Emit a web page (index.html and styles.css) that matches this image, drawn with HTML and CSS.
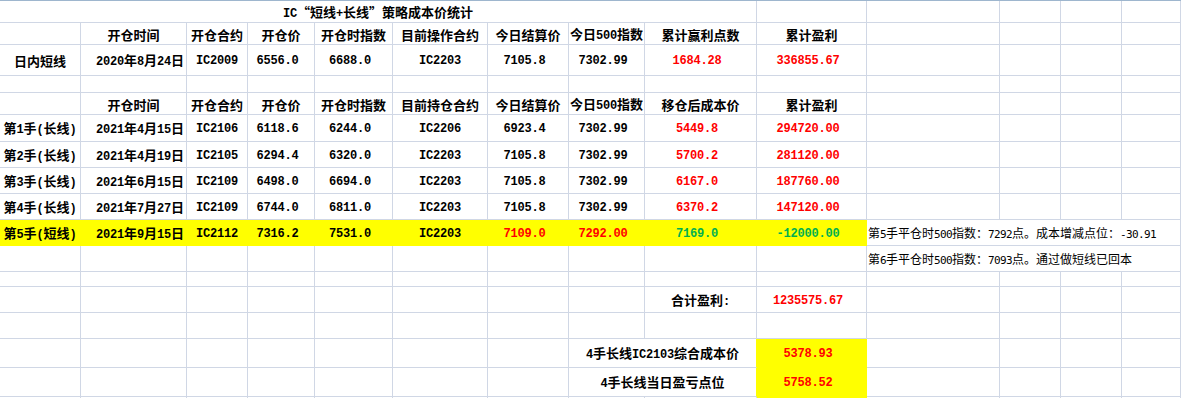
FILE: index.html
```html
<!DOCTYPE html>
<html lang="zh-CN">
<head>
<meta charset="utf-8">
<title>IC策略成本价统计</title>
<link rel="stylesheet" href="styles.css">
</head>
<body>
<div class="sheet">
  <!-- row 0 -->
  <div class="c s9 title"><span><span class="m">IC</span><span class="q">“</span>短线<span class="m">+</span>长线<span class="q">”</span>策略成本价统计</span></div>
  <div class="c"></div><div class="c"></div><div class="c"></div><div class="c"></div><div class="c"></div>
  <!-- row 1 -->
  <div class="c"></div>
  <div class="c">开仓时间</div>
  <div class="c">开仓合约</div>
  <div class="c">开仓价</div>
  <div class="c">开仓时指数</div>
  <div class="c">目前操作合约</div>
  <div class="c">今日结算价</div>
  <div class="c"><span>今日<span class="m">500</span>指数</span></div>
  <div class="c">累计赢利点数</div>
  <div class="c">累计盈利</div>
  <div class="c"></div><div class="c"></div><div class="c"></div><div class="c"></div>
  <!-- row 2 -->
  <div class="c">日内短线</div>
  <div class="c date"><span><span class="m">2020</span>年<span class="m">8</span>月<span class="m">24</span>日</span></div>
  <div class="c m">IC2009</div>
  <div class="c m num">6556.0</div>
  <div class="c m num">6688.0</div>
  <div class="c m">IC2203</div>
  <div class="c m num">7105.8</div>
  <div class="c m num">7302.99</div>
  <div class="c m num red">1684.28</div>
  <div class="c m num red">336855.67</div>
  <div class="c"></div><div class="c"></div><div class="c"></div><div class="c"></div>
  <!-- row 3 -->
  <div class="c"></div><div class="c"></div><div class="c"></div><div class="c"></div><div class="c"></div><div class="c"></div><div class="c"></div>
  <div class="c"></div><div class="c"></div><div class="c"></div><div class="c"></div><div class="c"></div><div class="c"></div><div class="c"></div>
  <!-- row 4 -->
  <div class="c"></div>
  <div class="c">开仓时间</div>
  <div class="c">开仓合约</div>
  <div class="c">开仓价</div>
  <div class="c">开仓时指数</div>
  <div class="c">目前持仓合约</div>
  <div class="c">今日结算价</div>
  <div class="c"><span>今日<span class="m">500</span>指数</span></div>
  <div class="c">移仓后成本价</div>
  <div class="c">累计盈利</div>
  <div class="c"></div><div class="c"></div><div class="c"></div><div class="c"></div>
  <!-- row 5 -->
  <div class="c"><span>第<span class="m">1</span>手<span class="m">(</span>长线<span class="m">)</span></span></div>
  <div class="c date"><span><span class="m">2021</span>年<span class="m">4</span>月<span class="m">15</span>日</span></div>
  <div class="c m">IC2106</div>
  <div class="c m num">6118.6</div>
  <div class="c m num">6244.0</div>
  <div class="c m">IC2206</div>
  <div class="c m num">6923.4</div>
  <div class="c m num">7302.99</div>
  <div class="c m num red">5449.8</div>
  <div class="c m num red">294720.00</div>
  <div class="c"></div><div class="c"></div><div class="c"></div><div class="c"></div>
  <!-- row 6 -->
  <div class="c"><span>第<span class="m">2</span>手<span class="m">(</span>长线<span class="m">)</span></span></div>
  <div class="c date"><span><span class="m">2021</span>年<span class="m">4</span>月<span class="m">19</span>日</span></div>
  <div class="c m">IC2105</div>
  <div class="c m num">6294.4</div>
  <div class="c m num">6320.0</div>
  <div class="c m">IC2203</div>
  <div class="c m num">7105.8</div>
  <div class="c m num">7302.99</div>
  <div class="c m num red">5700.2</div>
  <div class="c m num red">281120.00</div>
  <div class="c"></div><div class="c"></div><div class="c"></div><div class="c"></div>
  <!-- row 7 -->
  <div class="c"><span>第<span class="m">3</span>手<span class="m">(</span>长线<span class="m">)</span></span></div>
  <div class="c date"><span><span class="m">2021</span>年<span class="m">6</span>月<span class="m">15</span>日</span></div>
  <div class="c m">IC2109</div>
  <div class="c m num">6498.0</div>
  <div class="c m num">6694.0</div>
  <div class="c m">IC2203</div>
  <div class="c m num">7105.8</div>
  <div class="c m num">7302.99</div>
  <div class="c m num red">6167.0</div>
  <div class="c m num red">187760.00</div>
  <div class="c"></div><div class="c"></div><div class="c"></div><div class="c"></div>
  <!-- row 8 -->
  <div class="c"><span>第<span class="m">4</span>手<span class="m">(</span>长线<span class="m">)</span></span></div>
  <div class="c date"><span><span class="m">2021</span>年<span class="m">7</span>月<span class="m">27</span>日</span></div>
  <div class="c m">IC2109</div>
  <div class="c m num">6744.0</div>
  <div class="c m num">6811.0</div>
  <div class="c m">IC2203</div>
  <div class="c m num">7105.8</div>
  <div class="c m num">7302.99</div>
  <div class="c m num red">6370.2</div>
  <div class="c m num red">147120.00</div>
  <div class="c"></div><div class="c"></div><div class="c"></div><div class="c"></div>
  <!-- row 9 -->
  <div class="c yel"><span>第<span class="m">5</span>手<span class="m">(</span>短线<span class="m">)</span></span></div>
  <div class="c yel date"><span><span class="m">2021</span>年<span class="m">9</span>月<span class="m">15</span>日</span></div>
  <div class="c yel m">IC2112</div>
  <div class="c yel m num">7316.2</div>
  <div class="c yel m num">7531.0</div>
  <div class="c yel m">IC2203</div>
  <div class="c yel m num red">7109.0</div>
  <div class="c yel m num red">7292.00</div>
  <div class="c yel m num green">7169.0</div>
  <div class="c yel m num green">-12000.00</div>
  <div class="c s4 note"><span>第<span class="d">5</span>手平仓时<span class="d">500</span>指数：<span class="d">7292</span>点。成本增减点位：<span class="d">-30.91</span></span></div>
  <!-- row 10 -->
  <div class="c"></div><div class="c"></div><div class="c"></div><div class="c"></div><div class="c"></div>
  <div class="c"></div><div class="c"></div><div class="c"></div><div class="c"></div><div class="c"></div>
  <div class="c s4 note"><span>第<span class="d">6</span>手平仓时<span class="d">500</span>指数：<span class="d">7093</span>点。通过做短线已回本</span></div>
  <!-- row 11 -->
  <div class="c"></div><div class="c"></div><div class="c"></div><div class="c"></div><div class="c"></div><div class="c"></div><div class="c"></div>
  <div class="c"></div><div class="c"></div><div class="c"></div><div class="c"></div><div class="c"></div><div class="c"></div><div class="c"></div>
  <!-- row 12 -->
  <div class="c"></div><div class="c"></div><div class="c"></div><div class="c"></div>
  <div class="c"></div><div class="c"></div><div class="c"></div><div class="c"></div>
  <div class="c"><span>合计盈利<span class="m">:</span></span></div>
  <div class="c m num red">1235575.67</div>
  <div class="c"></div><div class="c"></div><div class="c"></div><div class="c"></div>
  <!-- row 13 -->
  <div class="c"></div><div class="c"></div><div class="c"></div><div class="c"></div><div class="c"></div><div class="c"></div><div class="c"></div>
  <div class="c"></div><div class="c"></div><div class="c"></div><div class="c"></div><div class="c"></div><div class="c"></div><div class="c"></div>
  <!-- row 14 -->
  <div class="c"></div><div class="c"></div><div class="c"></div><div class="c"></div><div class="c"></div><div class="c"></div><div class="c"></div>
  <div class="c s2 edge"><span><span class="m">4</span>手长线<span class="m">IC2103</span>综合成本价</span></div>
  <div class="c yel m num red">5378.93</div>
  <div class="c"></div><div class="c"></div><div class="c"></div><div class="c"></div>
  <!-- row 15 -->
  <div class="c"></div><div class="c"></div><div class="c"></div><div class="c"></div><div class="c"></div><div class="c"></div><div class="c"></div>
  <div class="c s2 edge"><span><span class="m">4</span>手长线当日盈亏点位</span></div>
  <div class="c yel m num red">5758.52</div>
  <div class="c"></div><div class="c"></div><div class="c"></div><div class="c"></div>
  <!-- row 16 -->
  <div class="c"></div><div class="c"></div><div class="c"></div><div class="c"></div><div class="c"></div><div class="c"></div><div class="c"></div>
  <div class="c"></div><div class="c"></div><div class="c yel"></div><div class="c"></div><div class="c"></div><div class="c"></div><div class="c"></div>
</div>
</body>
</html>
```
FILE: styles.css
```css
html, body {
  margin: 0;
  padding: 0;
  background: #ffffff;
  overflow: hidden;
}

.sheet {
  display: grid;
  grid-template-columns: 81px 106px 61px 67px 78px 95px 81px 76px 112px 110px 133px 61px 61px 59px;
  grid-template-rows: 22px 22px 31px 17px 22px 27px 26px 26px 26px 26px 26px 15px 26px 26px 29px 29px 1px;
  width: 1181px;
  height: 397px;
  overflow: hidden;
  border-top: 1px solid #9eb6ce;
  font-family: "Noto Sans CJK SC", sans-serif;
  font-weight: bold;
  font-size: 13px;
  line-height: 14px;
  color: #000000;
}

.c {
  box-sizing: border-box;
  min-width: 0;
  border-right: 1px solid #d0d7e5;
  border-bottom: 1px solid #d0d7e5;
  display: flex;
  align-items: center;
  justify-content: center;
  padding-top: 2px;
  white-space: nowrap;
}

.m {
  font-family: "Liberation Mono", monospace;
  font-size: 12px;
  letter-spacing: -0.2px;
}

.q {
  font-family: "Noto Sans CJK SC", sans-serif;
}

.num {
  padding-right: 7px;
}

.date {
  justify-content: flex-end;
  padding-right: 2px;
}

.red {
  color: #ff0000;
}

.green {
  color: #00b050;
}

.yel {
  background: #ffff00;
  border-right-color: #ffff00;
  border-bottom-color: #ffff00;
}

.s9 {
  grid-column: span 9;
}

.s4 {
  grid-column: span 4;
}

.s2 {
  grid-column: span 2;
}

.edge {
  border-right-color: #ffff00;
}

.title {
  padding-top: 3px;
}

.note {
  justify-content: flex-start;
  padding-left: 1px;
  font-weight: normal;
  font-size: 12px;
}

.note .d {
  font-family: "DejaVu Sans Mono", monospace;
  font-size: 11px;
  letter-spacing: -0.62px;
}
```
